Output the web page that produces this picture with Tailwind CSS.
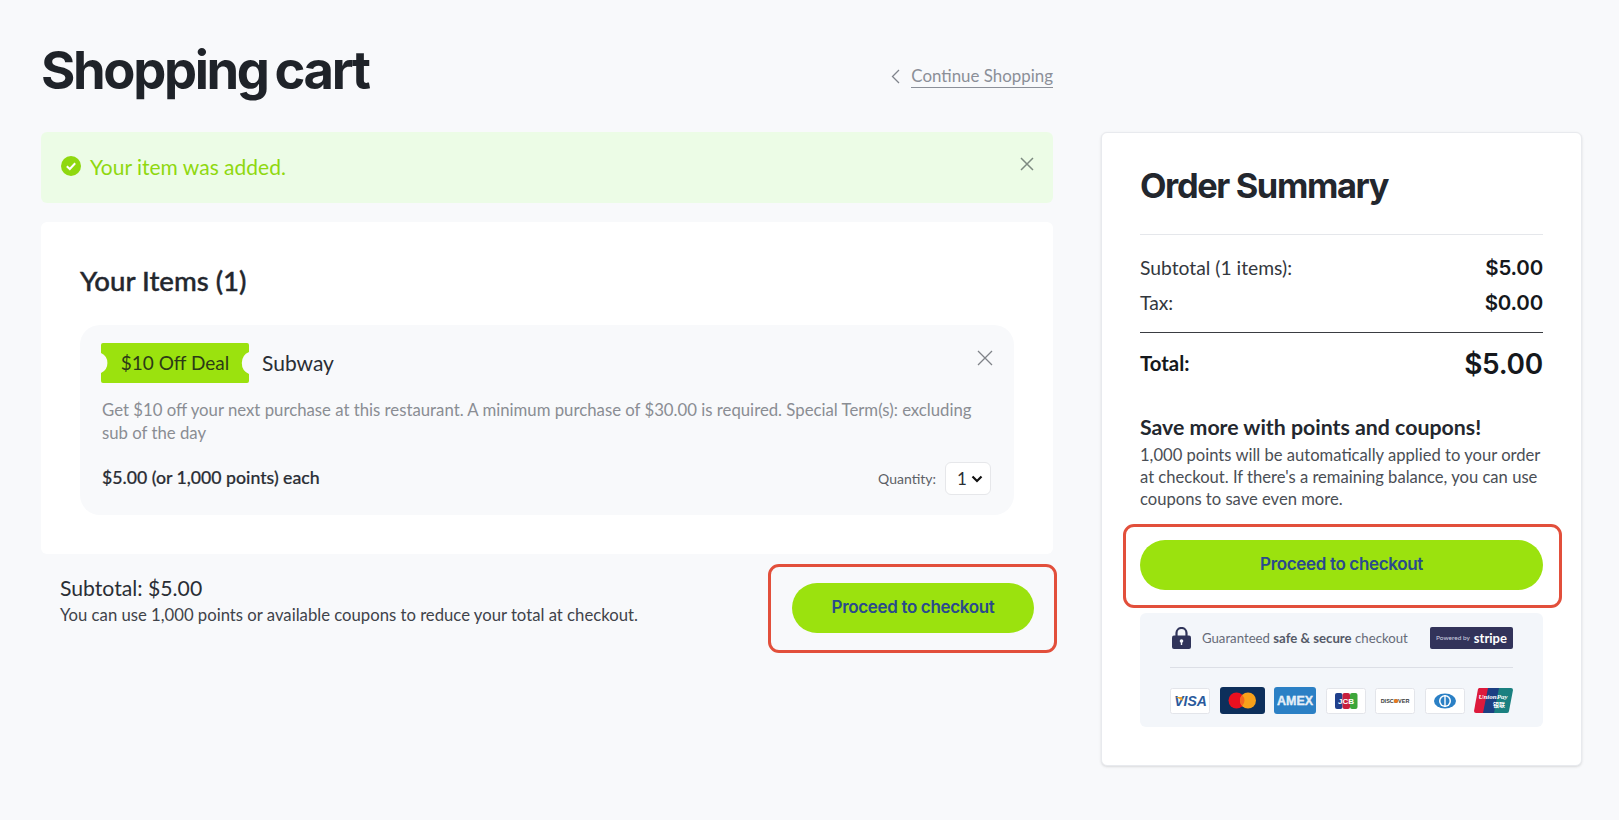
<!DOCTYPE html>
<html lang="en">
<head>
  <meta charset="UTF-8">
  <meta name="viewport" content="width=device-width, initial-scale=1">
  <title>Shopping cart</title>
  <script src="https://cdn.jsdelivr.net/npm/@tailwindcss/browser@4"></script>
</head>
<body class="bg-[#f8f9fb] font-['Lato',sans-serif] text-[#23272e]">
  <div class="flex items-start pl-[41px] pr-[38px] h-[820px] overflow-hidden">

    <!-- left column -->
    <div class="w-[1012px] shrink-0">
      <div class="h-[132px] flex items-start justify-between">
        <h1 class="mt-[38px] font-['Inter',sans-serif] font-bold text-[52.5px] leading-[64px] tracking-[-0.045em] [word-spacing:-0.06em] text-[#1f2329]">Shopping cart</h1>
        <a href="#" class="mt-[65px] flex items-center gap-[11px] text-[16.9px] leading-[22px] text-[#8b8f98]">
          <svg class="w-[9px] h-[15px]" viewBox="0 0 9 15" fill="none" stroke="#80848c" stroke-width="1.3"><path d="M8 1 1.5 7.5 8 14"/></svg>
          <span class="border-b border-[#8b8f98]">Continue Shopping</span>
        </a>
      </div>

      <!-- alert -->
      <div class="h-[71px] rounded-md bg-[#ecfce6] pl-[20px] pr-[19px] flex items-center justify-between">
        <div class="flex items-center gap-[9px] text-[21px] text-[#8fd80f] -mt-[4px]">
          <svg class="w-[20px] h-[20px]" viewBox="0 0 20 20"><circle cx="10" cy="10" r="10" fill="#8fd80f"/><path d="M5.8 10.2 8.800 13l5.400-5.800" fill="none" stroke="#fff" stroke-width="2"/></svg>
          <span class="mt-[2px]">Your item was added.</span>
        </div>
        <svg class="w-[14px] h-[14px] -mt-[8px]" viewBox="0 0 14 14" fill="none" stroke="#7d8a80" stroke-width="1.5"><path d="M1 1l12 12M13 1 1 13"/></svg>
      </div>

      <!-- items card -->
      <div class="mt-[19px] h-[332px] rounded-md bg-white pt-[42px] px-[39px]">
        <h2 class="text-[27.6px] leading-[34px] font-medium [-webkit-text-stroke:0.4px] text-[#23272e]">Your Items (1)</h2>
        <div class="mt-[27px] h-[190px] rounded-[20px] bg-[#f8f9fb] pl-[21px] pr-[21px] pt-[18px]">
          <div class="flex items-center justify-between">
            <div class="flex items-center gap-[13px]">
              <div class="relative w-[148px] h-[40px] flex items-center justify-center text-[19px] text-[#2c3a16]">
                <svg class="absolute inset-0" width="148" height="40" viewBox="0 0 148 40"><path d="M2 0H146a2 2 0 0 1 2 2V9A12 12 0 0 0 148 31V38a2 2 0 0 1-2 2H2a2 2 0 0 1-2-2V30A11 11 0 0 0 0 10V2a2 2 0 0 1 2-2Z" fill="#9be20e"/></svg>
                <span class="relative">$10 Off Deal</span>
              </div>
              <span class="text-[21px] text-[#2a2e35]">Subway</span>
            </div>
            <svg class="w-[16px] h-[16px] -mt-[10px]" viewBox="0 0 16 16" fill="none" stroke="#7f8388" stroke-width="1.3"><path d="M1 1l14 14M15 1 1 15"/></svg>
          </div>
          <p class="mt-[15px] pl-[1px] text-[16.75px] leading-[23px] text-[#8a8d93]">Get $10 off your next purchase at this restaurant. A minimum purchase of $30.00 is required. Special Term(s): excluding sub of the day</p>
          <div class="mt-[18px] mr-[2px] flex items-center justify-between pl-[1px]">
            <span class="text-[17.7px] font-medium [-webkit-text-stroke:0.2px] text-[#2a2e35]">$5.00 (or 1,000 points) each</span>
            <div class="flex items-center gap-[9px]">
              <span class="text-[14px] text-[#5c6066]">Quantity:</span>
              <div class="w-[46px] h-[33px] rounded-md border border-[#e6e7ea] bg-white flex items-center justify-between pl-[11px] pr-[7px]">
                <span class="text-[17px] text-[#2a2e35]">1</span>
                <svg class="w-[12px] h-[8px]" viewBox="0 0 12 8" fill="none" stroke="#111" stroke-width="2.2"><path d="M1.5 1.5 6 6l4.500-4.500"/></svg>
              </div>
            </div>
          </div>
        </div>
      </div>

      <!-- subtotal row -->
      <div class="mt-[19px] pl-[19px] pr-[19px] flex items-center justify-between">
        <div class="mb-[16px]">
          <div class="text-[21.2px] leading-[30px] text-[#2a2e35]">Subtotal: $5.00</div>
          <div class="text-[16.7px] leading-[24px] text-[#3f434a]">You can use 1,000 points or available coupons to reduce your total at checkout.</div>
        </div>
        <a href="#" class="relative w-[242px] h-[50px] rounded-full bg-[#9be20e] flex items-center justify-center font-['Inter',sans-serif] font-semibold text-[17px] tracking-[-0.02em] text-[#2a4a8c]">
          Proceed to checkout
          <span class="absolute -left-[24px] -top-[19px] w-[289px] h-[89px] border-[3px] border-[#e24f3b] rounded-[11px]"></span>
        </a>
      </div>
    </div>

    <!-- order summary -->
    <aside class="ml-[48px] mt-[132px] w-[481px] h-[634px] shrink-0 rounded-md bg-white border border-[#e8eaee] shadow-sm px-[38px]">
      <h2 class="mt-[31px] font-['Inter',sans-serif] font-bold text-[34.4px] leading-[44px] tracking-[-0.04em] text-[#23272e]">Order Summary</h2>
      <div class="mt-[26px] border-t border-[#e5e7eb] pt-[16px]">
        <div class="flex items-center justify-between h-[35px]">
          <span class="text-[19.3px] text-[#33373d]">Subtotal (1 items):</span>
          <span class="font-['Inter',sans-serif] font-semibold text-[20.5px] tracking-[-0.01em] text-[#15181c]">$5.00</span>
        </div>
        <div class="flex items-center justify-between h-[35px]">
          <span class="text-[19.3px] text-[#33373d]">Tax:</span>
          <span class="font-['Inter',sans-serif] font-semibold text-[20.5px] tracking-[-0.01em] text-[#15181c]">$0.00</span>
        </div>
      </div>
      <div class="mt-[11px] border-t border-[#3a3d42] flex items-center justify-between h-[62px]">
        <span class="text-[20.4px] font-bold text-[#15181c]">Total:</span>
        <span class="font-['Inter',sans-serif] font-semibold text-[28px] tracking-[-0.01em] text-[#15181c]">$5.00</span>
      </div>
      <h3 class="mt-[20px] text-[21.3px] leading-[26px] font-bold text-[#23272e]">Save more with points and coupons!</h3>
      <p class="mt-[4px] text-[16.6px] leading-[22px] text-[#4a4e55]">1,000 points will be automatically applied to your order at checkout. If there's a remaining balance, you can use coupons to save even more.</p>
      <a href="#" class="relative mt-[30px] w-[403px] h-[50px] rounded-full bg-[#9be20e] flex items-center justify-center font-['Inter',sans-serif] font-semibold text-[17px] tracking-[-0.02em] text-[#2a4a8c]">
        Proceed to checkout
        <span class="absolute -left-[17px] -top-[16px] w-[439px] h-[84px] border-[3px] border-[#e24f3b] rounded-[11px]"></span>
      </a>

      <!-- trust badge -->
      <div class="mt-[23px] w-[403px] h-[114px] rounded-md bg-[#f3f6fa] px-[30px] pt-[14px]">
        <div class="flex items-center justify-between h-[22px]">
          <div class="flex items-center gap-[11px] pl-[2px]">
            <svg class="w-[19px] h-[22px]" viewBox="0 0 19 22"><path d="M4.500 9V6a5 5 0 0 1 10 0v3" fill="none" stroke="#30345a" stroke-width="2.2"/><rect y="8.500" width="19" height="13.500" rx="2" fill="#30345a"/><circle cx="9.500" cy="14" r="1.800" fill="#f3f6fa"/><rect x="8.800" y="14" width="1.400" height="4" fill="#f3f6fa"/></svg>
            <span class="mt-[2px] text-[13.2px] text-[#666b78] whitespace-nowrap">Guaranteed <b class="font-bold text-[#555a68]">safe &amp; secure</b> checkout</span>
          </div>
          <div class="w-[83px] h-[22px] rounded-[2px] bg-[#32335a] flex items-center justify-center gap-[4px] text-white">
            <span class="text-[6.5px] text-[#cfd2e0]">Powered by</span>
            <span class="text-[13px] font-bold leading-none">stripe</span>
          </div>
        </div>
        <div class="mt-[18px] border-t border-[#dcdfe6]"></div>
        <div class="mt-[19px] flex items-center justify-between">
          <svg width="40" height="26" viewBox="0 0 40 26"><rect x=".5" y=".5" width="39" height="25" rx="2" fill="#fff" stroke="#e3e5ea"/><text x="20.500" y="18" text-anchor="middle" font-family="Liberation Sans" font-weight="700" font-style="italic" font-size="14" fill="#2a5a9c">VISA</text><path d="M6 9h6l1 4z" fill="#efa42c"/></svg>
          <svg width="45" height="27" viewBox="0 0 45 27"><rect width="45" height="27" rx="3" fill="#0d2f5b"/><circle cx="16.500" cy="13.500" r="8" fill="#e8101f"/><circle cx="28" cy="13.500" r="8" fill="#f7a11a"/><path d="M22.250 8a8 8 0 0 1 0 11 8 8 0 0 1 0-11Z" fill="#f4671f"/></svg>
          <svg width="42" height="27" viewBox="0 0 42 27"><rect width="42" height="27" rx="3" fill="#2b80c5"/><text x="21" y="18" text-anchor="middle" font-family="Liberation Sans" font-weight="700" font-size="12" fill="#dfeaf5" stroke="#fff" stroke-width=".3" textLength="36" lengthAdjust="spacingAndGlyphs">AMEX</text></svg>
          <svg width="40" height="26" viewBox="0 0 40 26"><rect x=".5" y=".5" width="39" height="25" rx="2" fill="#fff" stroke="#e3e5ea"/><rect x="9" y="5" width="7.500" height="16" rx="2" fill="#21408c"/><rect x="16.500" y="5" width="7.500" height="16" rx="2" fill="#c81f3d"/><rect x="24" y="5" width="7.500" height="16" rx="2" fill="#3da63a"/><text x="20" y="16" text-anchor="middle" font-family="Liberation Sans" font-weight="700" font-size="8" fill="#fff">JCB</text></svg>
          <svg width="40" height="26" viewBox="0 0 40 26"><rect x=".5" y=".5" width="39" height="25" rx="2" fill="#fff" stroke="#e3e5ea"/><text x="20" y="15" text-anchor="middle" font-family="Liberation Sans" font-weight="700" font-size="5.500" fill="#3a3a3a">DISCOVER</text><circle cx="21" cy="13" r="2" fill="#ee7a1a"/></svg>
          <svg width="40" height="26" viewBox="0 0 40 26"><rect x=".5" y=".5" width="39" height="25" rx="2" fill="#fff" stroke="#e3e5ea"/><ellipse cx="20" cy="13" rx="11" ry="7.500" fill="#2b80c5"/><circle cx="20" cy="13" r="6" fill="#fff"/><circle cx="20" cy="13" r="4.500" fill="#2b80c5"/><rect x="19.300" y="7" width="1.400" height="12" fill="#fff"/></svg>
          <svg width="39" height="25" viewBox="0 0 39 25"><path d="M5 0h11l-5 25H2a2 2 0 0 1-2-2L4 1Z" fill="#dd1a3c"/><path d="M14 0h13l-5 25H9Z" fill="#1c3f82"/><path d="M25 0h12a2 2 0 0 1 2 2l-4 21a2 2 0 0 1-2 2H20Z" fill="#1a8080"/><text x="19" y="11" text-anchor="middle" font-family="Liberation Serif" font-weight="700" font-style="italic" font-size="7" fill="#fff">UnionPay</text><text x="25" y="19" text-anchor="middle" font-family="Noto Sans CJK SC" font-weight="700" font-size="6" fill="#fff">银联</text></svg>
        </div>
      </div>
    </aside>
  </div>
</body>
</html>
